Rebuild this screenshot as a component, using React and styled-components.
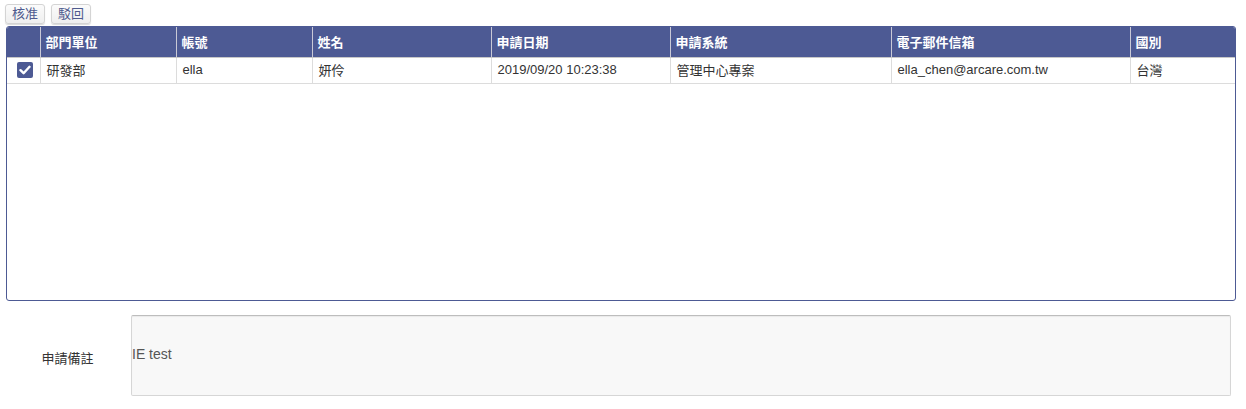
import React from "react";
import styled, { createGlobalStyle } from "styled-components";

const Global = createGlobalStyle`
  html, body { margin: 0; padding: 0; background: #fff; }
  body { font-family: Arial, "Liberation Sans", "Noto Sans CJK TC", sans-serif; font-size: 13px; color: #333; }
  * { box-sizing: border-box; }
`;

const Page = styled.div`
  width: 1246px;
  height: 409px;
  overflow: hidden;
`;

const Toolbar = styled.div`
  display: flex;
  gap: 6px;
  padding: 4px 0 0 5px;
  height: 26px;
`;

const Button = styled.button`
  height: 20px;
  padding: 0 6px;
  border: 1px solid #d4d4d4;
  border-radius: 3px;
  background: linear-gradient(#fbfbfb, #efefef);
  box-shadow: 0 1px 1px rgba(0,0,0,0.15);
  color: #4e5a8e;
  font-family: inherit;
  font-size: 13px;
  line-height: 18px;
  cursor: pointer;
`;

const Panel = styled.div`
  margin-left: 6px;
  width: 1230px;
  height: 275px;
  border: 1px solid #4d5a94;
  border-radius: 3px;
  overflow: hidden;
`;

const Table = styled.table`
  border-collapse: collapse;
  table-layout: fixed;
  width: 1228px;
`;

const Th = styled.th`
  background: #4d5a94;
  color: #fff;
  font-weight: bold;
  font-size: 13px;
  text-align: left;
  height: 30px;
  padding: 0 5px 1px 5px;
  border-left: 1px solid #c9c9d6;
  border-bottom: 1px solid #c8c8c8;
  &:first-child { border-left: none; }
`;

const Td = styled.td`
  height: 26px;
  padding: 0 5px 1px 6px;
  font-size: 13px;
  color: #333;
  border-left: 1px solid #dcdcdc;
  border-bottom: 1px solid #dcdcdc;
  white-space: nowrap;
  &:first-child { border-left: none; text-align: center; padding: 0; }
`;

const Check = styled.span`
  display: inline-flex;
  align-items: center;
  justify-content: center;
  width: 16px;
  height: 16px;
  border-radius: 2px;
  background: #4d5a94;
  vertical-align: middle;
  margin-left: 4px;
`;

const NoteRow = styled.div`
  display: flex;
  align-items: center;
  margin-top: 14px;
`;

const NoteLabel = styled.div`
  width: 131px;
  padding-left: 4px;
  text-align: center;
  font-size: 13px;
  color: #333;
  padding-top: 4px;
`;

const NoteBox = styled.div`
  width: 1100px;
  height: 81px;
  background: #f8f8f8;
  border: 1px solid #d6d6d6;
  border-top-color: #bdbdbd;
  border-radius: 2px;
  box-shadow: inset 0 1px 1px rgba(0,0,0,0.06);
  display: flex;
  align-items: center;
  font-size: 14px;
  color: #555;
  padding-bottom: 3px;
`;

const cols = [33, 136, 136, 179, 179, 221, 239, 105];
const headers = ["", "部門單位", "帳號", "姓名", "申請日期", "申請系統", "電子郵件信箱", "國別"];
const row = ["研發部", "ella", "妍伶", "2019/09/20 10:23:38", "管理中心專案", "ella_chen@arcare.com.tw", "台灣"];

export default function App() {
  return (
    <Page>
      <Global />
      <Toolbar>
        <Button>核准</Button>
        <Button>駁回</Button>
      </Toolbar>
      <Panel>
        <Table>
          <colgroup>
            {cols.map((w, i) => <col key={i} style={{ width: w }} />)}
          </colgroup>
          <thead>
            <tr>{headers.map((h, i) => <Th key={i}>{h}</Th>)}</tr>
          </thead>
          <tbody>
            <tr>
              <Td>
                <Check>
                  <svg width="12" height="10" viewBox="0 0 12 10">
                    <path d="M1.5 5.2 L4.6 8.2 L10.5 1.8" stroke="#fff" strokeWidth="2.4" fill="none" strokeLinecap="round" strokeLinejoin="round" />
                  </svg>
                </Check>
              </Td>
              {row.map((c, i) => <Td key={i}>{c}</Td>)}
            </tr>
          </tbody>
        </Table>
      </Panel>
      <NoteRow>
        <NoteLabel>申請備註</NoteLabel>
        <NoteBox>IE test</NoteBox>
      </NoteRow>
    </Page>
  );
}
